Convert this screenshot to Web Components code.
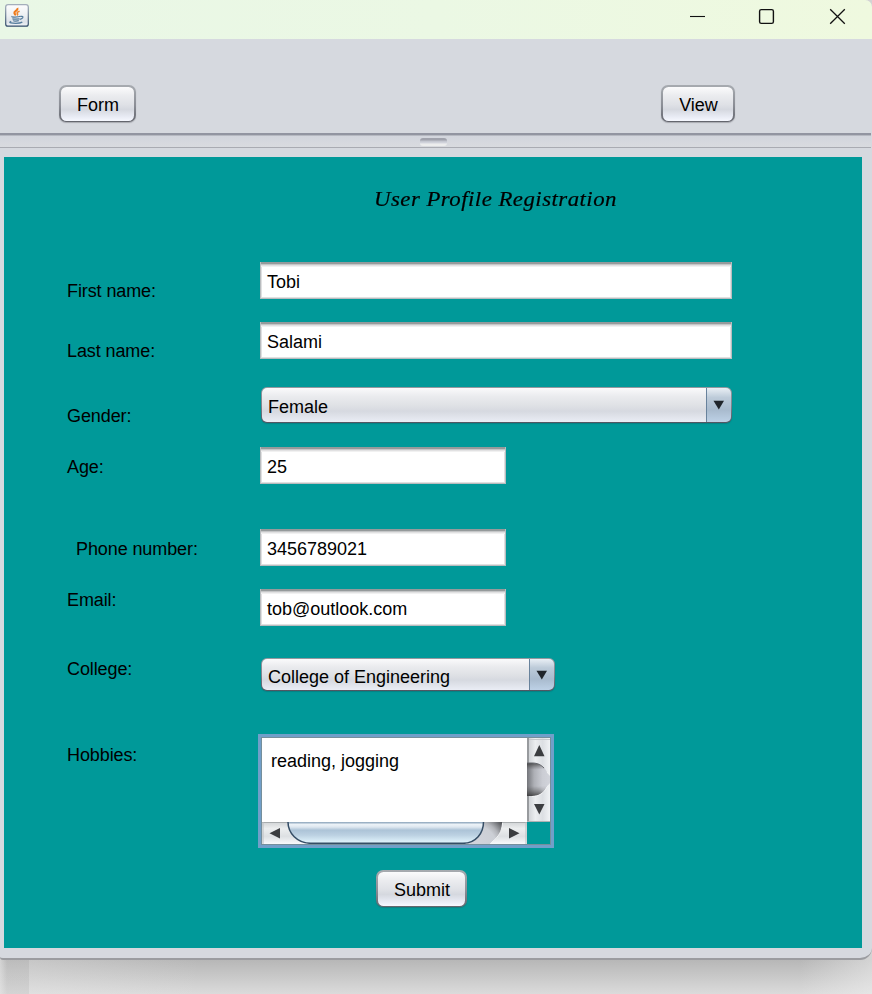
<!DOCTYPE html>
<html lang="en">
<head>
<meta charset="utf-8">
<title>User Profile Registration</title>
<style>
html,body{margin:0;height:994px;overflow:hidden}
body{font:18px/20px "Liberation Sans",Arial,sans-serif;color:#000;background:linear-gradient(90deg,rgba(240,240,240,.45),rgba(240,240,240,0) 7px),linear-gradient(90deg,rgba(0,0,0,.055) 29px,transparent 29px),linear-gradient(90deg,rgba(235,235,235,.3) 29px,rgba(235,235,235,0) 200px,rgba(235,235,235,0) 800px,rgba(240,240,240,.5)),linear-gradient(#b7b7b7 960px,#dbdbdb 994px)}
</style>
</head>
<body>
<app-window></app-window>
<script>
const define=(name,html,init)=>customElements.define(name,class extends HTMLElement{
  constructor(){super();this.attachShadow({mode:'open'}).innerHTML=html;}
  connectedCallback(){if(init)init(this);}
});

define('nimbus-button',`<style>
:host{display:block;box-sizing:border-box;width:var(--w);height:37px;padding:1px;border-radius:7px;background:linear-gradient(#a7abb0,#8b8e96 55%,#63656d);box-shadow:0 1px 1px rgba(60,60,70,.3)}
div{box-sizing:border-box;height:34px;margin:1px 1px 0;padding:8px 0 0 1px;text-align:center;border-radius:5.5px;background:linear-gradient(#fbfbfc,#ebecef 25%,#dfe1e6 52%,#d5d8df 66%,#e9ecf5 88%,#f6f8ff)}
</style><div><slot></slot></div>`);

define('text-box',`<style>
:host{display:block;box-sizing:border-box;width:var(--w);height:37px;padding:10px 7px 0 6px;background:#fff;border:solid #b9bcbf;border-width:0 1px 1px;
box-shadow:inset 0 2px #959a9b,inset 0 3px #c4c6c7,inset 0 4px #e1e1e2,inset 0 5px #f1f1f1,inset 1px 0 #dfe0e1,inset -1px -1px #e0e1e1}
</style><slot></slot>`);

define('combo-box',`<style>
:host{display:flex;box-sizing:border-box;width:var(--w);height:var(--h,36px);margin:0 0 0 1px;padding:1px 1px 1.5px;border-radius:6px;background:linear-gradient(#9599a0,#83868f 50%,#515561);box-shadow:0 1px 1px rgba(20,60,70,.25)}
.v{flex:1;box-sizing:border-box;padding:var(--pad,9px) 0 0 6px;border-radius:5px 0 0 5px;background:linear-gradient(#fafafb,#eaebee 25%,#dfe1e5 52%,#d6d9e0 68%,#eaedf5)}
.a{width:24px;display:flex;align-items:center;justify-content:center;border-left:1px solid #68829c;border-radius:0 5px 5px 0;background:linear-gradient(#e9eff5,#bdcbd9 28%,#a9bbce 65%,#bdd1e6)}
svg{display:block;margin-top:var(--ay,0)}
</style><div class="v"><slot></slot></div><div class="a"><svg width="12" height="10"><path d="M.5 .8H11L5.8 9.4Z" fill="#20252b"/></svg></div>`);

define('form-row',`<style>
:host{display:flex;height:var(--rh)}
.l{flex:none;box-sizing:border-box;width:256px;padding:var(--ly) 0 0 var(--lx,63px);white-space:nowrap;letter-spacing:-.1px}
</style><div class="l"></div><slot></slot>`,e=>{e.shadowRoot.querySelector('.l').textContent=e.getAttribute('label');});

define('scroll-area',`<style>
:host{display:grid;box-sizing:border-box;width:296px;height:114px;margin-left:-2px;border:3px solid #719fc9;grid-template:84px 22px/265px 23px;
box-shadow:inset 0 0 0 1px #758f9c;padding:1px}
.t{background:#fff;padding:13px 0 0 9px;box-sizing:border-box}
svg{display:block}
</style><div class="t"><slot></slot></div>
<svg width="23" height="84" viewBox="0 0 23 84">
<defs><linearGradient id="b"><stop stop-color="#c9ccd0"/><stop offset=".35" stop-color="#eceef0"/><stop offset=".65" stop-color="#dcdfe3"/><stop offset="1" stop-color="#f4f6f8"/></linearGradient>
<linearGradient id="k"><stop stop-color="#73757a"/><stop offset=".3" stop-color="#aeb0b6"/><stop offset=".65" stop-color="#cbcdd4"/><stop offset="1" stop-color="#d3d5dc"/></linearGradient>
<linearGradient id="s" x2="0" y2="1"><stop stop-color="#333" stop-opacity=".8"/><stop offset=".2" stop-color="#555" stop-opacity="0"/><stop offset=".7" stop-color="#555" stop-opacity="0"/><stop offset="1" stop-color="#333" stop-opacity=".85"/></linearGradient>
<linearGradient id="f"><stop stop-color="#fff"/><stop offset=".5" stop-color="#fff" stop-opacity=".9"/><stop offset="1" stop-color="#fff" stop-opacity="0"/></linearGradient><mask id="m"><path fill="url(#f)" d="M0 0H24V84H0Z"/></mask></defs>
<path d="M0 0H24V84H0Z" fill="url(#b)"/><path d="M0 0H2V84H0Z" fill="#989b9e"/><path d="M2 1.5H23" stroke="#c5c8cb"/><path d="M0 83.5H24" stroke="#aeb2b4"/>
<path d="M0 25H5C12 25 17 28 20 34Q22 37 24 38V45Q22 46 20 49C17 55 12 58 5 58H0Z" fill="url(#k)"/><path mask="url(#m)" d="M0 25H5C12 25 17 28 20 34Q22 37 24 38V45Q22 46 20 49C17 55 12 58 5 58H0Z" fill="url(#s)"/>
<path d="M5 58.5C12 58.5 17 55 20 49Q22 46 24 45M24 38Q22 37 20 34" fill="none" stroke="#f2f3f5"/>
<path d="M0 25H5C11 25 14 27 17 30" fill="none" stroke="#66696e"/>
<path d="M12.3 7L17.5 18.2H7Z M7 66H17.5L12.3 76.5Z" fill="#3b3d40"/></svg>
<svg width="265" height="22" viewBox="0 0 265 22">
<defs><linearGradient id="c" x2="0" y2="1"><stop stop-color="#d0d3d5"/><stop offset=".3" stop-color="#eceeef"/><stop offset=".65" stop-color="#dde0e3"/><stop offset="1" stop-color="#f8f9fb"/></linearGradient>
<linearGradient id="t" x2="0" y2="1"><stop stop-color="#87a0b8"/><stop offset=".12" stop-color="#edf3f8"/><stop offset=".24" stop-color="#dce6ef"/><stop offset=".38" stop-color="#acc3d7"/><stop offset=".62" stop-color="#bcd1e2"/><stop offset="1" stop-color="#e4f7ff"/></linearGradient>
<radialGradient id="d" gradientUnits="userSpaceOnUse" cx="214" cy="24" r="35"><stop stop-color="#d2d4dc"/><stop offset=".58" stop-color="#cccfd5"/><stop offset=".72" stop-color="#b2b4b9"/><stop offset="1" stop-color="#4c4e52"/></radialGradient></defs>
<path d="M0 0H265V22H0Z" fill="url(#c)"/><path d="M0 .5H265" stroke="#a7abad"/><path d="M1 0V22M264 0V22" stroke="#b9bdc0"/>
<path d="M205 0H240V3C240 10 236 15 231 19Q229 20 228 22H205Z" fill="url(#d)"/><path d="M240.5 1C240 10 236 15 231 19L228 22" fill="none" stroke="#f2f3f5"/>
<path d="M26 0C26 11 35 21.3 49 21.3H201C214 21.3 221.5 11 221.5 0Z" fill="url(#t)"/><path d="M26 0C26 11 35 21.3 49 21.3H201C214 21.3 221.5 11 221.5 0" fill="none" stroke="#354d65" stroke-width="1.5"/>
<path d="M7.5 11.2L18 6V16.5Z M257.5 11.2L247 6V16.5Z" fill="#3b3d40"/></svg>`);

define('title-bar',`<style>
:host{display:flex;height:39px;background:linear-gradient(90deg,#e9f7e6,#ebf8e4 50%,#eff9df);border-top-right-radius:7px}
svg{display:block}.i{margin:4px auto 0 5px}
</style>
<svg class="i" width="24" height="23" viewBox="0 0 24 23" fill="none"><defs><linearGradient id="g" x2="0" y2="1"><stop stop-color="#fdfdfe"/><stop offset=".5" stop-color="#edf0f3"/><stop offset=".8" stop-color="#dce1e8"/><stop offset="1" stop-color="#f2f5f8"/></linearGradient><linearGradient id="h" x2="0" y2="1"><stop stop-color="#a4aebb"/><stop offset="1" stop-color="#304a68"/></linearGradient></defs>
<rect x=".7" y=".6" width="22.6" height="21.6" rx="2.3" fill="url(#g)" stroke="url(#h)" stroke-width="1.2"/>
<path d="M12.4 4C13.4 6.4 8.6 7.2 9.4 9.2Q9.8 10.3 10.8 11.2" stroke="#ef7a1b" stroke-width="2.1"/><path d="M14.6 7.2C11.8 8.2 11.6 9.1 12.6 9.8Q13 10.6 12 11.4" stroke="#ee862d" stroke-width="1.5"/>
<path d="M7.2 12.2Q6 13.1 10 13Q14 13 15.4 12.3M15.6 12.4Q18.8 11.9 17.6 13.9Q16.8 15 14.8 15.4M7.6 14.5Q7.8 15.3 10.5 15.2L14.5 14.8M8.4 16.4Q8.6 17.2 10.8 17.1L13.8 16.7M6.2 17.4Q2.8 18.8 8 19.2Q14.8 19.6 17.3 18.1" stroke="#557d9d" stroke-width="1.25"/></svg>
<svg width="182" height="39" viewBox="690 0 182 39" fill="none" stroke="#111"><path d="M690 16.5H705" stroke-width="1.1"/><rect x="759.6" y="9.6" width="13.8" height="13.8" rx="1.7" stroke-width="1.4"/><path d="M830.2 9.2L844.8 23.8M844.8 9.2L830.2 23.8" stroke-width="1.3"/></svg>`);

define('split-divider',`<style>
:host{display:flex;justify-content:center;box-sizing:border-box;height:15px;width:871px;border-top:2px solid #9295a1;border-bottom:1px solid #a9abb2;background:linear-gradient(#b6b9c1 0 1px,#d2d5dd 1px,#d9dbdf)}
i{box-sizing:border-box;width:27px;height:8px;margin:3px 5px 0 0;border-radius:3px;background:linear-gradient(#a0a2ac 0 2px,#c0c3cc 3px,#d5d7df 5px,#eceded 6px)}
</style><i></i>`);

define('profile-form',`<style>
:host{display:block;box-sizing:border-box;margin:9px 0 0 4px;width:858px;height:791px;background:#009999;padding-top:29px}
h1{margin:0 0 50px 370px;width:max-content;font:italic 20px/26px "Lucida Calligraphy","Lucida Handwriting","Liberation Serif",serif;letter-spacing:.42px;transform:scaleX(1.14);transform-origin:0 0;-webkit-text-stroke:.2px #000;white-space:nowrap}
nimbus-button{margin:22px 0 0 372px}
</style>
<h1>User Profile Registration</h1>
<form-row label="First name:" style="--rh:60px;--ly:19px"><text-box style="--w:472px">Tobi</text-box></form-row>
<form-row label="Last name:" style="--rh:65px;--ly:19px"><text-box style="--w:472px">Salami</text-box></form-row>
<form-row label="Gender:" style="--rh:60px;--ly:19px"><combo-box style="--w:471px">Female</combo-box></form-row>
<form-row label="Age:" style="--rh:82px;--ly:10px"><text-box style="--w:246px">25</text-box></form-row>
<form-row label="Phone number:" style="--rh:60px;--ly:10px;--lx:72px"><text-box style="--w:246px">3456789021</text-box></form-row>
<form-row label="Email:" style="--rh:69px;--ly:1px"><text-box style="--w:246px">tob@outlook.com</text-box></form-row>
<form-row label="College:" style="--rh:76px;--ly:1px"><combo-box style="--w:294px;--h:33px;--pad:8px;--ay:2px">College of Engineering</combo-box></form-row>
<form-row label="Hobbies:" style="--rh:114px;--ly:11px"><scroll-area>reading, jogging</scroll-area></form-row>
<nimbus-button style="--w:91px">Submit</nimbus-button>`);

define('app-window',`<style>
:host{display:block;box-sizing:border-box;width:872px;height:960px;background:#d6d9df;border-bottom:2px solid #9b9ca0;border-radius:0 7px 12px 3px}
.bar{display:flex;justify-content:space-between;box-sizing:border-box;height:94px;padding:46px 137px 0 59px}
</style>
<title-bar></title-bar>
<div class="bar"><nimbus-button style="--w:77px">Form</nimbus-button><nimbus-button style="--w:74px">View</nimbus-button></div>
<split-divider></split-divider>
<profile-form></profile-form>`);
</script>
</body>
</html>
